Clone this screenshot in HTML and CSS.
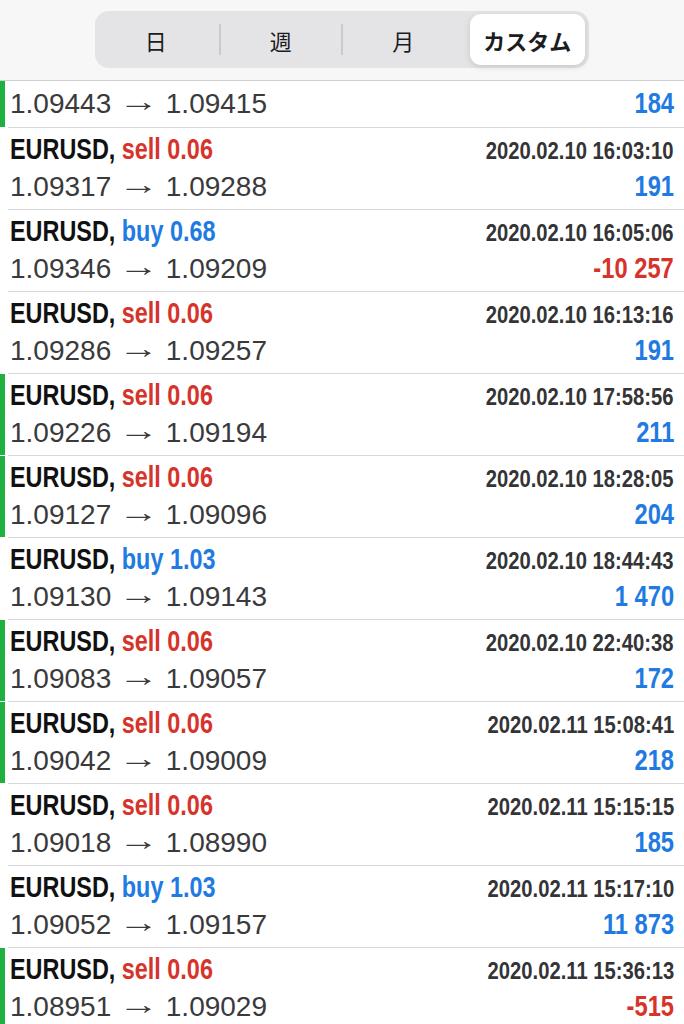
FILE: index.html
```html
<!DOCTYPE html>
<html lang="ja">
<head>
    <meta charset="UTF-8">
    <meta name="viewport" content="width=device-width, initial-scale=1.0">
    <title>履歴</title>
    <link rel="stylesheet" href="styles.css">
</head>
<body>
    <div class="header">
        <div class="segmented">
            <div class="segment">日</div>
            <div class="divider"></div>
            <div class="segment">週</div>
            <div class="divider"></div>
            <div class="segment">月</div>
            <div class="gap"></div>
            <div class="segment active">カスタム</div>
        </div>
    </div>

    <div class="list">
        <div class="row open partial">
            <div class="mark"></div>
            <div class="body">
                <div class="line">
                    <span class="price">1.09443 <span class="arrow">→</span> 1.09415</span>
                    <span class="profit plus">184</span>
                </div>
            </div>
        </div>

        <div class="row">
            <div class="mark"></div>
            <div class="body">
                <div class="line">
                    <span class="title">EURUSD, <span class="sell">sell 0.06</span></span>
                    <span class="time">2020.02.10 16:03:10</span>
                </div>
                <div class="line">
                    <span class="price">1.09317 <span class="arrow">→</span> 1.09288</span>
                    <span class="profit plus">191</span>
                </div>
            </div>
        </div>

        <div class="row">
            <div class="mark"></div>
            <div class="body">
                <div class="line">
                    <span class="title">EURUSD, <span class="buy">buy 0.68</span></span>
                    <span class="time">2020.02.10 16:05:06</span>
                </div>
                <div class="line">
                    <span class="price">1.09346 <span class="arrow">→</span> 1.09209</span>
                    <span class="profit minus">-10 257</span>
                </div>
            </div>
        </div>

        <div class="row">
            <div class="mark"></div>
            <div class="body">
                <div class="line">
                    <span class="title">EURUSD, <span class="sell">sell 0.06</span></span>
                    <span class="time">2020.02.10 16:13:16</span>
                </div>
                <div class="line">
                    <span class="price">1.09286 <span class="arrow">→</span> 1.09257</span>
                    <span class="profit plus">191</span>
                </div>
            </div>
        </div>

        <div class="row open">
            <div class="mark"></div>
            <div class="body">
                <div class="line">
                    <span class="title">EURUSD, <span class="sell">sell 0.06</span></span>
                    <span class="time">2020.02.10 17:58:56</span>
                </div>
                <div class="line">
                    <span class="price">1.09226 <span class="arrow">→</span> 1.09194</span>
                    <span class="profit plus">211</span>
                </div>
            </div>
        </div>

        <div class="row open">
            <div class="mark"></div>
            <div class="body">
                <div class="line">
                    <span class="title">EURUSD, <span class="sell">sell 0.06</span></span>
                    <span class="time">2020.02.10 18:28:05</span>
                </div>
                <div class="line">
                    <span class="price">1.09127 <span class="arrow">→</span> 1.09096</span>
                    <span class="profit plus">204</span>
                </div>
            </div>
        </div>

        <div class="row">
            <div class="mark"></div>
            <div class="body">
                <div class="line">
                    <span class="title">EURUSD, <span class="buy">buy 1.03</span></span>
                    <span class="time">2020.02.10 18:44:43</span>
                </div>
                <div class="line">
                    <span class="price">1.09130 <span class="arrow">→</span> 1.09143</span>
                    <span class="profit plus">1 470</span>
                </div>
            </div>
        </div>

        <div class="row open">
            <div class="mark"></div>
            <div class="body">
                <div class="line">
                    <span class="title">EURUSD, <span class="sell">sell 0.06</span></span>
                    <span class="time">2020.02.10 22:40:38</span>
                </div>
                <div class="line">
                    <span class="price">1.09083 <span class="arrow">→</span> 1.09057</span>
                    <span class="profit plus">172</span>
                </div>
            </div>
        </div>

        <div class="row open">
            <div class="mark"></div>
            <div class="body">
                <div class="line">
                    <span class="title">EURUSD, <span class="sell">sell 0.06</span></span>
                    <span class="time">2020.02.11 15:08:41</span>
                </div>
                <div class="line">
                    <span class="price">1.09042 <span class="arrow">→</span> 1.09009</span>
                    <span class="profit plus">218</span>
                </div>
            </div>
        </div>

        <div class="row">
            <div class="mark"></div>
            <div class="body">
                <div class="line">
                    <span class="title">EURUSD, <span class="sell">sell 0.06</span></span>
                    <span class="time">2020.02.11 15:15:15</span>
                </div>
                <div class="line">
                    <span class="price">1.09018 <span class="arrow">→</span> 1.08990</span>
                    <span class="profit plus">185</span>
                </div>
            </div>
        </div>

        <div class="row">
            <div class="mark"></div>
            <div class="body">
                <div class="line">
                    <span class="title">EURUSD, <span class="buy">buy 1.03</span></span>
                    <span class="time">2020.02.11 15:17:10</span>
                </div>
                <div class="line">
                    <span class="price">1.09052 <span class="arrow">→</span> 1.09157</span>
                    <span class="profit plus">11 873</span>
                </div>
            </div>
        </div>

        <div class="row open">
            <div class="mark"></div>
            <div class="body">
                <div class="line">
                    <span class="title">EURUSD, <span class="sell">sell 0.06</span></span>
                    <span class="time">2020.02.11 15:36:13</span>
                </div>
                <div class="line">
                    <span class="price">1.08951 <span class="arrow">→</span> 1.09029</span>
                    <span class="profit minus">-515</span>
                </div>
            </div>
        </div>
    </div>
</body>
</html>
```

FILE: styles.css
```css
html, body {
    height: 100%;
    overflow: hidden;
}
body {
    margin: 0;
    font-family: "Liberation Sans", Arial, sans-serif;
    background-color: #fff;
}
.header {
    height: 81px;
    box-sizing: border-box;
    padding-top: 11px;
    background-color: #f7f7f7;
    border-bottom: 1px solid #cfcfd1;
    display: flex;
    justify-content: center;
}
.segmented {
    width: 494px;
    height: 57px;
    box-sizing: border-box;
    padding: 3px;
    border-radius: 14px;
    background-color: #e4e4e7;
    display: grid;
    grid-template-columns: 1fr 2px 1fr 2px 1fr 2px 1fr;
    align-items: center;
}
.segment {
    height: 100%;
    display: flex;
    align-items: center;
    justify-content: center;
    font-family: "Noto Sans CJK JP", sans-serif;
    font-size: 22px;
    color: #1c1c1e;
}
.segment:first-child {
    padding-right: 5px;
}
.segment.active {
    margin-left: 4px;
    margin-right: 1px;
    background-color: white;
    border-radius: 11px;
    box-shadow: 0px 2px 6px rgba(0, 0, 0, 0.13);
    font-weight: bold;
}
.divider {
    height: 31px;
    background-color: #cacace;
}
.row {
    display: flex;
}
.mark {
    width: 5px;
    flex: none;
    margin-right: 3px;
    margin-bottom: 1px;
}
.row.open .mark {
    background-color: #1fb13f;
}
.body {
    flex: 1;
    padding: 2px 10px 5px 2px;
    border-bottom: 1px solid #d8d8da;
}
.row.partial .body {
    padding-top: 3px;
    padding-bottom: 6px;
}
.line {
    height: 37px;
    line-height: 37px;
    display: flex;
    justify-content: space-between;
    align-items: baseline;
    white-space: nowrap;
}
.title {
    display: inline-block;
    font-size: 30px;
    font-weight: bold;
    color: #111;
    transform: scaleX(0.78);
    transform-origin: left;
}
.sell {
    color: #d6342b;
}
.buy {
    color: #1f7be2;
}
.time {
    display: inline-block;
    font-size: 23px;
    font-weight: bold;
    color: #343436;
    transform: scaleX(0.88);
    transform-origin: right;
}
.price {
    font-size: 28px;
    color: #3a3a3c;
}
.arrow {
    display: inline-block;
    line-height: 0;
    font-size: 29px;
    vertical-align: 2px;
    margin: 0 5px;
    transform: scaleX(1.4);
}
.profit {
    display: inline-block;
    font-size: 30px;
    font-weight: bold;
    transform: scaleX(0.79);
    transform-origin: right;
}
.profit.plus {
    color: #1f7be2;
}
.profit.minus {
    color: #d6342b;
}
```
